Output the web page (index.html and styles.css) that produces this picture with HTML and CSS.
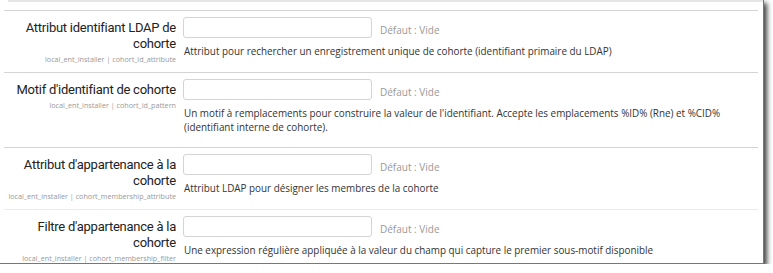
FILE: index.html
```html
<!DOCTYPE html>
<html lang="fr">
<head>
    <meta charset="UTF-8">
    <title>Réglages cohortes LDAP</title>
    <link rel="stylesheet" href="styles.css">
</head>
<body>
    <div class="frame">
        <div class="prev-row"></div>
        <div class="settings">
            <div class="setting">
                <div class="label">
                    <h3>Attribut identifiant LDAP de cohorte</h3>
                    <span class="key">local_ent_installer | cohort_id_attribute</span>
                </div>
                <div class="field">
                    <div class="line">
                        <input type="text">
                        <span class="default">Défaut : Vide</span>
                    </div>
                    <p class="desc">Attribut pour rechercher un enregistrement unique de cohorte (identifiant primaire du LDAP)</p>
                </div>
            </div>
            <div class="setting">
                <div class="label">
                    <h3>Motif d'identifiant de cohorte</h3>
                    <span class="key">local_ent_installer | cohort_id_pattern</span>
                </div>
                <div class="field">
                    <div class="line">
                        <input type="text">
                        <span class="default">Défaut : Vide</span>
                    </div>
                    <p class="desc">Un motif à remplacements pour construire la valeur de l'identifiant. Accepte les emplacements %ID% (Rne) et %CID% (identifiant interne de cohorte).</p>
                </div>
            </div>
            <div class="setting">
                <div class="label">
                    <h3>Attribut d'appartenance à la cohorte</h3>
                    <span class="key">local_ent_installer | cohort_membership_attribute</span>
                </div>
                <div class="field">
                    <div class="line">
                        <input type="text">
                        <span class="default">Défaut : Vide</span>
                    </div>
                    <p class="desc">Attribut LDAP pour désigner les membres de la cohorte</p>
                </div>
            </div>
            <div class="setting light">
                <div class="label">
                    <h3>Filtre d'appartenance à la cohorte</h3>
                    <span class="key">local_ent_installer | cohort_membership_filter</span>
                </div>
                <div class="field">
                    <div class="line">
                        <input type="text">
                        <span class="default">Défaut : Vide</span>
                    </div>
                    <p class="desc">Une expression régulière appliquée à la valeur du champ qui capture le premier sous-motif disponible</p>
                </div>
            </div>
        </div>
    </div>
</body>
</html>
```

FILE: styles.css
```css
body {
    margin: 0;
    padding: 0;
    background-color: #fff;
    font-family: "Open Sans", sans-serif;
    color: #333;
}
.frame {
    width: 764px;
    height: 264px;
    overflow: hidden;
    background-color: #fff;
    box-shadow: 3px 3px 5px rgba(0,0,0,0.75);
    border-right: 1px solid #777;
    border-bottom: 1px solid #777;
    box-sizing: border-box;
}
.prev-row {
    height: 2px;
    margin-left: 8px;
    background-color: #e6e6e6;
}
.settings {
    padding: 8px 5px 0 4px;
}
.setting {
    display: grid;
    grid-template-columns: 172px 1fr;
    column-gap: 7px;
    border-top: 1px solid #d4d4d4;
    padding: 6px 0 8px;
}
.setting.light {
    border-top-color: #ebebeb;
}
.label {
    text-align: right;
    display: flex;
    flex-direction: column;
}
.label h3 {
    margin: 0;
    font-family: Roboto, sans-serif;
    font-weight: 400;
    font-size: 13px;
    letter-spacing: -0.25px;
    line-height: 16px;
    color: #222;
    padding-top: 3px;
}
.key {
    font-size: 7.2px;
    line-height: 10px;
    color: #999;
    margin-top: 2px;
    white-space: nowrap;
}
.field {
    padding-bottom: 5px;
}
.line {
    display: flex;
    align-items: center;
}
.line input {
    width: 189px;
    height: 21px;
    box-sizing: border-box;
    border: 1px solid #d4d4d4;
    border-radius: 3px;
    margin: 0;
    padding: 2px 6px;
}
.default {
    margin-left: 8px;
    font-size: 10px;
    color: #999;
    margin-top: 4px;
}
.desc {
    margin: 6px 0 0 1px;
    font-size: 9.9px;
    line-height: 14px;
}
```
